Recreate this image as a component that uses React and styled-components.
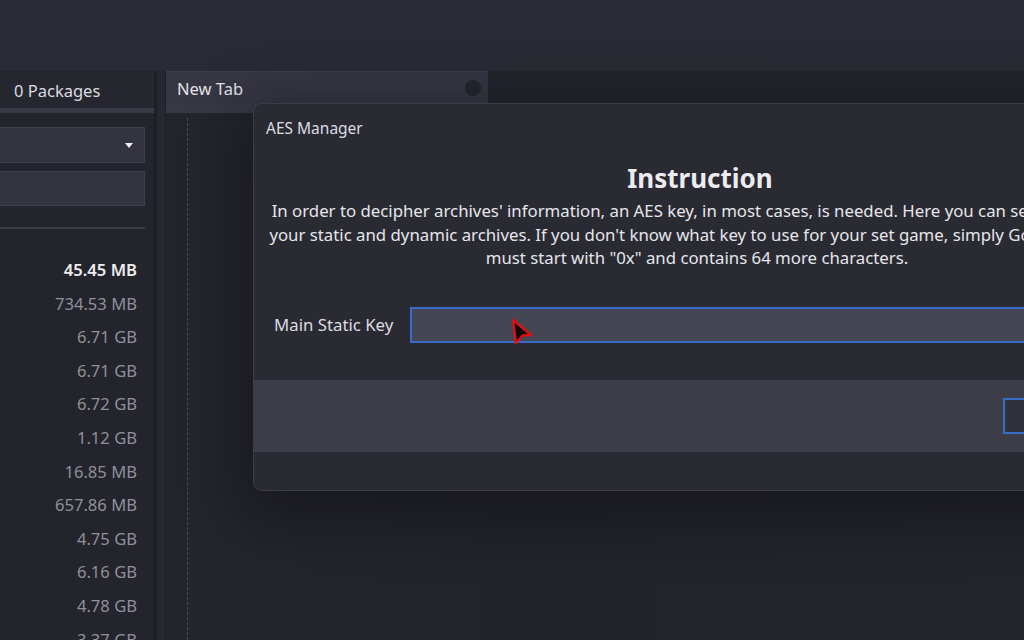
import React from 'react';
import styled, { createGlobalStyle } from 'styled-components';

const GlobalStyle = createGlobalStyle`
    html, body {
        margin: 0;
        padding: 0;
        background: #23242c;
    }
    * {
        box-sizing: border-box;
    }
`;

const Screen = styled.div`
    position: relative;
    width: 1024px;
    height: 640px;
    overflow: hidden;
    background: #23242c;
    font-family: 'Noto Sans', 'Open Sans', sans-serif;
    color: #e6e6ea;
`;

const TopArea = styled.div`
    height: 71px;
    background: linear-gradient(180deg, #2b2c35 0%, #292a33 100%);
`;

const Main = styled.div`
    display: flex;
    height: 569px;
`;

const LeftPanel = styled.div`
    width: 157px;
    display: flex;
    flex-direction: column;
    overflow: hidden;
    background: #23242c;
    border-right: 3px solid #1f2027;

    & > * {
        flex-shrink: 0;
    }
`;

const PanelHeader = styled.div`
    height: 40px;
    margin-top: 2px;
    display: flex;
    align-items: center;
    padding-left: 14px;
    font-size: 16.5px;
    background: #25262e;
    color: #dcdce2;
    border-bottom: 5px solid #383945;
`;

const Field = styled.div`
    height: ${(p) => p.$h}px;
    margin: ${(p) => p.$mt}px 9px 0 0;
    background: #33343f;
    border: 1px solid #3d3e4a;
    border-left: none;
    display: flex;
    align-items: center;
    justify-content: flex-end;
    padding-right: 11px;
`;

const Caret = styled.span`
    width: 0;
    height: 0;
    border-left: 4.5px solid transparent;
    border-right: 4.5px solid transparent;
    border-top: 5px solid #f0f0f4;
`;

const Rule = styled.div`
    height: 2px;
    margin: 21px 9px 0 0;
    background: #383945;
`;

const SizeList = styled.div`
    display: flex;
    flex-direction: column;
    padding: 24px 17px 0 0;
`;

const SizeRow = styled.div`
    height: 33.6px;
    line-height: 33.6px;
    text-align: right;
    font-size: 16.6px;
    color: ${(p) => (p.$active ? '#ececf0' : '#8f9099')};
    font-weight: ${(p) => (p.$active ? 600 : 400)};
`;

const Gutter = styled.div`
    width: 9px;
    background: #26272f;
    border-right: 1px solid #1f2027;
`;

const RightPanel = styled.div`
    flex: 1;
    display: flex;
    flex-direction: column;
`;

const TabStrip = styled.div`
    display: flex;
    height: 33px;
    flex-shrink: 0;
`;

const Tab = styled.div`
    width: 322px;
    height: 33px;
    display: flex;
    align-items: center;
    justify-content: space-between;
    padding: 0 7px 0 11px;
    background: #363743;
    font-size: 16.5px;
    color: #e2e2e8;
    border-top: 1px solid #3d3e4a;
`;

const CloseDot = styled.span`
    width: 16px;
    height: 16px;
    border-radius: 50%;
    background: #25262e;
`;

const TabUnderline = styled.div`
    height: 9px;
    flex-shrink: 0;
    background: #383945;
`;

const Content = styled.div`
    flex: 1;
    margin-left: 21px;
    margin-top: 5px;
    border-left: 1px dashed #4a4b57;
    background: linear-gradient(90deg, #24252d 0%, #22232b 40%, #23242c 100%);
`;

const Dialog = styled.div`
    position: absolute;
    left: 253px;
    top: 103px;
    width: 894px;
    height: 388px;
    display: flex;
    flex-direction: column;
    background: #292a32;
    border: 1px solid #3b3c46;
    border-radius: 9px;
    overflow: hidden;
    box-shadow: 0 14px 60px 10px rgba(10, 10, 14, 0.45);
`;

const DialogTitle = styled.div`
    padding: 13px 0 0 12px;
    height: 46px;
    font-size: 15.5px;
    color: #dcdce2;
`;

const Heading = styled.h2`
    margin: 12px 0 5px;
    text-align: center;
    font-size: 26px;
    font-weight: 700;
    line-height: 32px;
    color: #ececf0;
`;

const Paragraph = styled.p`
    margin: 0;
    text-align: center;
    font-size: 16.8px;
    line-height: 23.5px;
    color: #e6e6ea;
    white-space: nowrap;
    transform: translateX(-3px);
`;

const KeyRow = styled.div`
    display: flex;
    align-items: center;
    gap: 14px;
    margin-top: 37px;
    padding-left: 20px;
    height: 36px;
`;

const KeyLabel = styled.label`
    width: 122px;
    font-size: 16.8px;
    color: #dcdce2;
    white-space: nowrap;
`;

const KeyInput = styled.div`
    position: relative;
    flex: 1;
    height: 36px;
    background: #454654;
    border: 2px solid #3a6bc9;
`;

const Pointer = styled.svg`
    position: absolute;
    left: 98px;
    top: 9px;
`;

const Footer = styled.div`
    margin-top: 37px;
    height: 72px;
    background: #3d3d4a;
    display: flex;
    align-items: center;
    padding-left: 749px;
`;

const FooterButton = styled.div`
    width: 120px;
    height: 36px;
    background: #30313c;
    border: 2px solid #3a6bc9;
`;

const sizes = [
    '45.45 MB',
    '734.53 MB',
    '6.71 GB',
    '6.71 GB',
    '6.72 GB',
    '1.12 GB',
    '16.85 MB',
    '657.86 MB',
    '4.75 GB',
    '6.16 GB',
    '4.78 GB',
    '3.37 GB',
];

const App = () => {
    return (
        <Screen>
            <GlobalStyle />
            <TopArea />
            <Main>
                <LeftPanel>
                    <PanelHeader>0 Packages</PanelHeader>
                    <Field $mt={14} $h={36}>
                        <Caret />
                    </Field>
                    <Field $mt={8} $h={35} />
                    <Rule />
                    <SizeList>
                        {sizes.map((s, i) => (
                            <SizeRow key={i} $active={i === 0}>
                                {s}
                            </SizeRow>
                        ))}
                    </SizeList>
                </LeftPanel>
                <Gutter />
                <RightPanel>
                    <TabStrip>
                        <Tab>
                            New Tab
                            <CloseDot />
                        </Tab>
                    </TabStrip>
                    <TabUnderline />
                    <Content />
                </RightPanel>
            </Main>
            <Dialog>
                <DialogTitle>AES Manager</DialogTitle>
                <Heading>Instruction</Heading>
                <Paragraph>
                    In order to decipher archives' information, an AES key, in most cases, is needed. Here you can set the key for
                    <br />
                    your static and dynamic archives. If you don't know what key to use for your set game, simply Google it. Keys
                    <br />
                    must start with "0x" and contains 64 more characters.
                </Paragraph>
                <KeyRow>
                    <KeyLabel>Main Static Key</KeyLabel>
                    <KeyInput>
                        <Pointer width="26" height="30" viewBox="0 0 26 30">
                            <path
                                d="M3 2 L21 17 L12.5 17.5 L6 25 Z"
                                fill="#0a0a0a"
                                stroke="#e01010"
                                strokeWidth="2.4"
                                strokeLinejoin="round"
                            />
                        </Pointer>
                    </KeyInput>
                </KeyRow>
                <Footer>
                    <FooterButton />
                </Footer>
            </Dialog>
        </Screen>
    );
};

export default App;
